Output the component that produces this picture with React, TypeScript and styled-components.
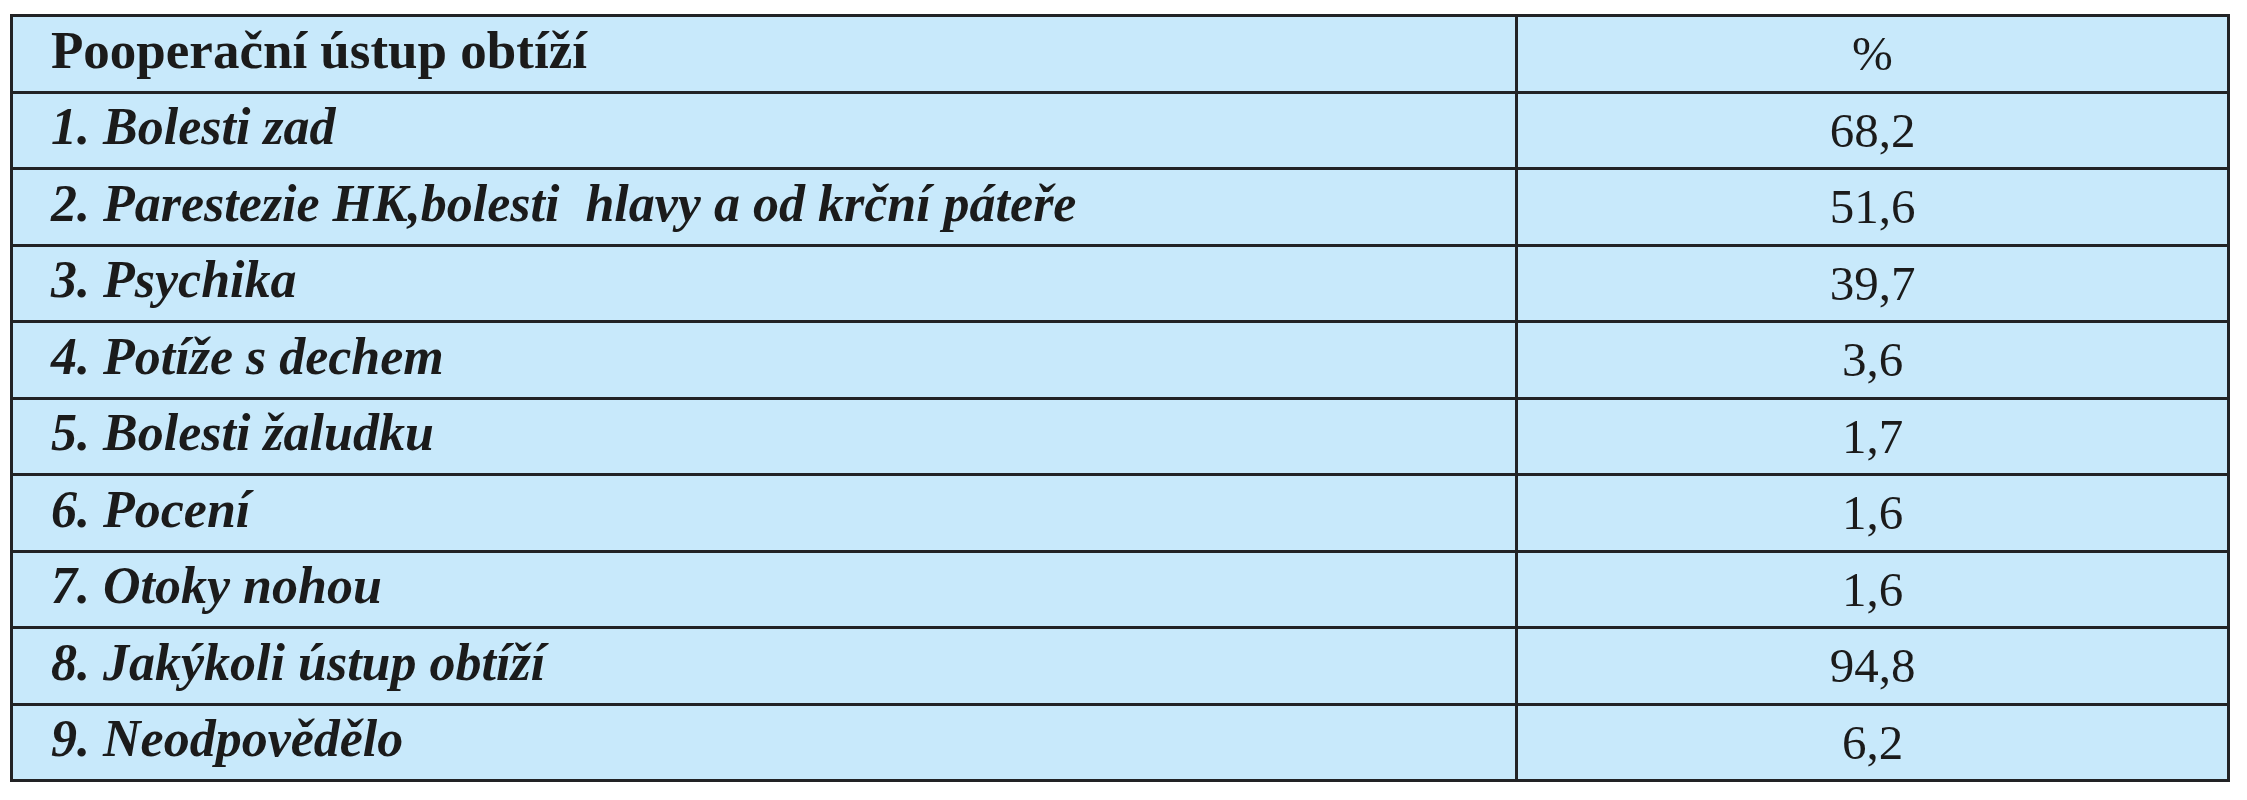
import React from 'react';
import styled, { createGlobalStyle } from 'styled-components';

const GlobalStyle = createGlobalStyle`
    html, body {
        margin: 0;
        padding: 0;
        background: #ffffff;
    }
`;

const Page = styled.div`
    padding: 14px 0 0 10px;
    font-family: 'Liberation Serif', 'Times New Roman', serif;
    color: #1b1b1b;
`;

const Table = styled.table`
    width: 2220px;
    border-collapse: collapse;
    table-layout: fixed;
    background: #c8e9fb;
    border: 3px solid #222325;
`;

const Cell = styled.td<{ $numeric?: boolean; $head?: boolean }>`
    height: 67.5px;
    padding: ${(p) => (p.$numeric ? '0' : '0 0 6px 38px')};
    border: 3px solid #222325;
    font-size: ${(p) => (p.$numeric ? '49px' : p.$head ? '53px' : '52px')};
    font-weight: ${(p) => (p.$numeric ? 400 : 700)};
    font-style: ${(p) => (p.$numeric || p.$head ? 'normal' : 'italic')};
    text-align: ${(p) => (p.$numeric ? 'center' : 'left')};
    vertical-align: middle;
    white-space: pre;
    line-height: 1;
`;

const rows: [string, string][] = [
    ['1. Bolesti zad', '68,2'],
    ['2. Parestezie HK,bolesti  hlavy a od krční páteře', '51,6'],
    ['3. Psychika', '39,7'],
    ['4. Potíže s dechem', '3,6'],
    ['5. Bolesti žaludku', '1,7'],
    ['6. Pocení', '1,6'],
    ['7. Otoky nohou', '1,6'],
    ['8. Jakýkoli ústup obtíží', '94,8'],
    ['9. Neodpovědělo', '6,2'],
];

export default function App() {
    return (
        <Page>
            <GlobalStyle />
            <Table>
                <colgroup>
                    <col style={{ width: 1505 }} />
                    <col />
                </colgroup>
                <tbody>
                    <tr>
                        <Cell $head>Pooperační ústup obtíží</Cell>
                        <Cell $numeric>%</Cell>
                    </tr>
                    {rows.map(([label, value]) => (
                        <tr key={label}>
                            <Cell>{label}</Cell>
                            <Cell $numeric>{value}</Cell>
                        </tr>
                    ))}
                </tbody>
            </Table>
        </Page>
    );
}
